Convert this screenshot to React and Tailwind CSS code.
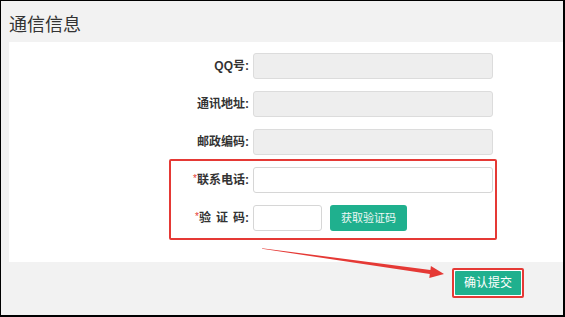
export default function App() {
  const font = { fontFamily: '"Liberation Sans", "Noto Sans CJK SC", sans-serif' };
  const Label = ({ children, star }) => (
    <div className="w-[240px] shrink-0 text-right text-[12px] font-bold text-[#333] leading-[26px]">
      {star && <span className="text-[#e53935] text-[10px] font-normal relative -top-[2px]">*</span>}
      {children}
    </div>
  );
  return (
    <div
      className="relative w-[565px] h-[317px] overflow-hidden bg-[#f2f2f2] border-t border-l border-r-2 border-b-2 border-black"
      style={font}
    >
      <div className="h-[41px] pl-[8px] pt-[12px]">
        <div className="text-[18px] leading-[20px] text-[#333]" style={{ fontFamily: '"Noto Sans CJK SC", sans-serif' }}>
          通信信息
        </div>
      </div>
      <div className="ml-[8px] h-[220px] bg-white pt-[11px] flex flex-col gap-[12px]">
        <div className="flex items-center h-[26px]">
          <Label>QQ号:</Label>
          <div className="ml-[4px] w-[240px] h-[26px] rounded-[3px] border border-[#dcdcdc] bg-[#eeeeee]" />
        </div>
        <div className="flex items-center h-[26px]">
          <Label>通讯地址:</Label>
          <div className="ml-[4px] w-[240px] h-[26px] rounded-[3px] border border-[#dcdcdc] bg-[#eeeeee]" />
        </div>
        <div className="flex items-center h-[26px]">
          <Label>邮政编码:</Label>
          <div className="ml-[4px] w-[240px] h-[26px] rounded-[3px] border border-[#dcdcdc] bg-[#eeeeee]" />
        </div>
        <div className="flex items-center h-[26px]">
          <Label star>联系电话:</Label>
          <div className="ml-[4px] w-[240px] h-[26px] rounded-[3px] border border-[#d6d6d6] bg-white" />
        </div>
        <div className="flex items-center h-[26px]">
          <Label star>
            <span className="tracking-[5px]">验证</span>码:
          </Label>
          <div className="ml-[4px] w-[69px] h-[26px] rounded-[3px] border border-[#d6d6d6] bg-white" />
          <div className="ml-[8px] w-[77px] h-[26px] rounded-[3px] bg-[#1fb08e] text-[#eef8f5] text-[11px] flex items-center justify-center">
            获取验证码
          </div>
        </div>
      </div>
      <div className="flex justify-end pr-[39px] pt-[6px]">
        <div className="border-2 border-[#e53935] p-[1px] bg-white rounded-[2px]">
          <div className="w-[66px] h-[24px] bg-[#1fb08e] text-white text-[12px] flex items-center justify-center rounded-[1px]">
            确认提交
          </div>
        </div>
      </div>
      <div className="absolute left-[168px] top-[158px] w-[328px] h-[81px] border-2 border-[#e53935] rounded-[2px]" />
      <svg className="absolute left-0 top-0" width="565" height="317" viewBox="1 1 565 317">
        <polygon
          points="262,248.2 430.4,270 430.9,266.1 444,274 429.3,277.9 429.8,274 262,248.8"
          fill="#e53935"
        />
      </svg>
    </div>
  );
}
